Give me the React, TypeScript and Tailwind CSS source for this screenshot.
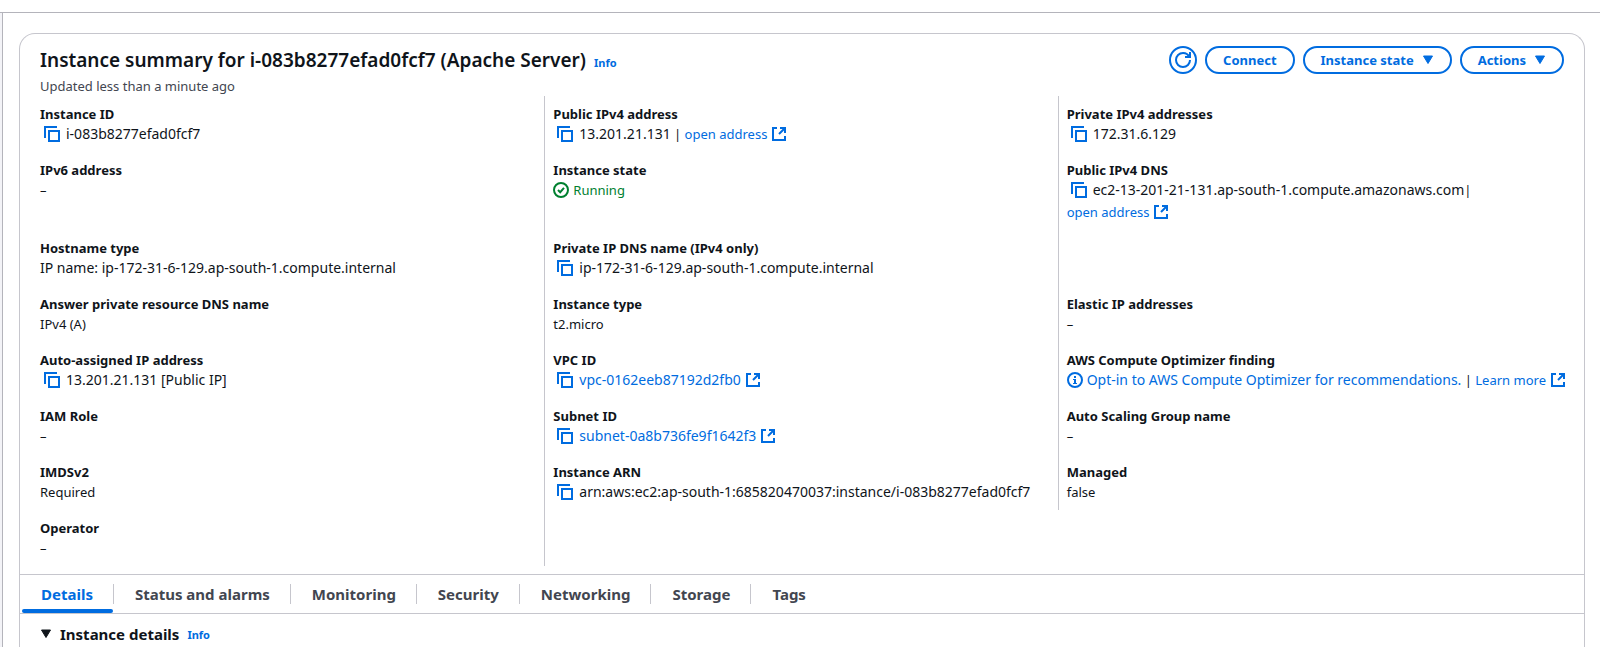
import { useState, type ReactNode } from "react";

function CopyIcon() {
  return (
    <svg viewBox="0 0 16 16" className="size-4" fill="none" stroke="currentColor" strokeWidth="2" aria-hidden="true">
      <path d="M1 12V1h12" />
      <path d="M5 5h10v10H5z" />
    </svg>
  );
}

function ExternalIcon() {
  return (
    <svg viewBox="0 0 16 16" className="ml-1 inline-block size-4 align-[-3px]" fill="none" stroke="currentColor" strokeWidth="2" aria-hidden="true">
      <path d="M6 2H2v12h12v-4" />
      <path d="M9 2h5v5M14 2L8 8" />
    </svg>
  );
}

function Caret() {
  return (
    <svg viewBox="0 0 12 10" className="h-[10px] w-3" aria-hidden="true">
      <path d="M1.5 1h9L6 8.5z" fill="currentColor" stroke="currentColor" strokeWidth="1" strokeLinejoin="round" />
    </svg>
  );
}

function Copy({ label, children }: { label: string; children: ReactNode }) {
  return (
    <>
      <button type="button" aria-label={label} className="mr-[6px] ml-1 inline-block size-4 align-[-3px] text-[#006ce0]">
        <CopyIcon />
      </button>
      <Code>{children}</Code>
    </>
  );
}

function Code({ children }: { children: ReactNode }) {
  return <span className="text-[14px] leading-5">{children}</span>;
}

function TextLink({ external, children }: { external?: boolean; children: ReactNode }) {
  return (
    <a href="#" className="text-[#006ce0] hover:underline">
      {children}
      {external && <ExternalIcon />}
    </a>
  );
}

type Field = { label: string; value: ReactNode } | null;

const ARN = "arn:aws:ec2:ap-south-1:685820470037:instance/i-083b8277efad0fcf7";

const rows: Field[][] = [
  [
    { label: "Instance ID", value: <Copy label="Copy instance ID">i-083b8277efad0fcf7</Copy> },
    {
      label: "Public IPv4 address",
      value: (
        <>
          <Copy label="Copy public IPv4 address">13.201.21.131</Copy> | <TextLink external>open address</TextLink>
        </>
      ),
    },
    { label: "Private IPv4 addresses", value: <Copy label="Copy private IPv4 address">172.31.6.129</Copy> },
  ],
  [
    { label: "IPv6 address", value: "–" },
    {
      label: "Instance state",
      value: (
        <span className="text-[#00802f]">
          <svg viewBox="0 0 16 16" className="mr-1 inline-block size-4 align-[-3px]" fill="none" stroke="currentColor" strokeWidth="2" aria-hidden="true">
            <circle cx="8" cy="8" r="7" />
            <path d="M5 8l2.2 2.2L11 5.8" />
          </svg>
          Running
        </span>
      ),
    },
    {
      label: "Public IPv4 DNS",
      value: (
        <>
          <div>
            <Copy label="Copy public IPv4 DNS">ec2-13-201-21-131.ap-south-1.compute.amazonaws.com</Copy>|
          </div>
          <div className="pt-[2px]">
            <TextLink external>open address</TextLink>
          </div>
        </>
      ),
    },
  ],
  [
    { label: "Hostname type", value: <Code>IP name: ip-172-31-6-129.ap-south-1.compute.internal</Code> },
    {
      label: "Private IP DNS name (IPv4 only)",
      value: <Copy label="Copy private IP DNS name">ip-172-31-6-129.ap-south-1.compute.internal</Copy>,
    },
    null,
  ],
  [
    { label: "Answer private resource DNS name", value: "IPv4 (A)" },
    { label: "Instance type", value: "t2.micro" },
    { label: "Elastic IP addresses", value: "–" },
  ],
  [
    { label: "Auto-assigned IP address", value: <Copy label="Copy auto-assigned IP address">13.201.21.131 [Public IP]</Copy> },
    {
      label: "VPC ID",
      value: (
        <Copy label="Copy VPC ID">
          <TextLink external>vpc-0162eeb87192d2fb0</TextLink>
        </Copy>
      ),
    },
    {
      label: "AWS Compute Optimizer finding",
      value: (
        <>
          <svg viewBox="0 0 16 16" className="mr-1 inline-block size-4 align-[-3px] text-[#006ce0]" fill="none" stroke="currentColor" strokeWidth="2" aria-hidden="true">
            <circle cx="8" cy="8" r="7" />
            <path d="M8 4v2M8 7v5" />
            <path d="M6 7.5h2M6 11.5h4" strokeWidth="1" />
          </svg>
          <Code>
            <TextLink>Opt-in to AWS Compute Optimizer for recommendations.</TextLink>
          </Code>{" "}
          | <TextLink external>Learn more</TextLink>
        </>
      ),
    },
  ],
  [
    { label: "IAM Role", value: "–" },
    {
      label: "Subnet ID",
      value: (
        <Copy label="Copy subnet ID">
          <TextLink external>subnet-0a8b736fe9f1642f3</TextLink>
        </Copy>
      ),
    },
    { label: "Auto Scaling Group name", value: "–" },
  ],
  [
    { label: "IMDSv2", value: "Required" },
    { label: "Instance ARN", value: <Copy label="Copy instance ARN">{ARN}</Copy> },
    { label: "Managed", value: "false" },
  ],
  [{ label: "Operator", value: "–" }],
];

const tabs = ["Details", "Status and alarms", "Monitoring", "Security", "Networking", "Storage", "Tags"];

const pill =
  "flex h-7 items-center rounded-full border-2 border-[#006ce0] text-[13px] font-bold text-[#006ce0] hover:bg-[#f0fbff]";

function Cell({ field, last }: { field: Field; last: boolean }) {
  return (
    <div className={`min-w-0 px-2 py-2 ${last ? "" : "border-r border-[#c6c6cd]"}`}>
      {field && (
        <>
          <dt className="font-bold">{field.label}</dt>
          <dd className="whitespace-nowrap">{field.value}</dd>
        </>
      )}
    </div>
  );
}

export default function App() {
  const [active, setActive] = useState("Details");

  return (
    <div className="flex min-h-screen flex-col bg-white font-['Noto_Sans',sans-serif] text-[13px] leading-5 text-[#0f141a]">
      <div className="h-[13px] border-b border-[#b4b4bb]" />
      <div className="flex flex-1">
        <div className="w-[3px] shrink-0 border-r border-[#b4b4bb] bg-[#f3f3f7]" />
        <main className="flex min-w-0 flex-1 flex-col pt-5 pr-[15px] pl-4">
          <section className="flex-1 rounded-t-2xl border border-b-0 border-[#c6c6cd]">
            <header className="flex items-start justify-between px-5 pt-3">
              <div>
                <div className="flex h-7 items-baseline gap-2">
                  <h1 className="text-[19px] leading-7 font-semibold">
                    Instance summary for i-083b8277efad0fcf7 (Apache Server)
                  </h1>
                  <a href="#" className="text-[11px] font-bold text-[#006ce0]">Info</a>
                </div>
                <p className="pt-[2px] text-[#424650]">Updated less than a minute ago</p>
              </div>
              <div className="flex gap-2">
                <button type="button" aria-label="Refresh" className={`${pill} w-7 justify-center`}>
                  <svg viewBox="0 0 16 16" className="size-4 shrink-0" fill="none" stroke="currentColor" strokeWidth="2" aria-hidden="true">
                    <path d="M15 8a7 7 0 1 1-7-7 6.87 6.87 0 0 1 6.3 4" />
                    <path d="M10 5h5V0" />
                  </svg>
                </button>
                <button type="button" className={`${pill} px-4`}>Connect</button>
                <button type="button" className={`${pill} gap-2 px-4`}>
                  Instance state <Caret />
                </button>
                <button type="button" className={`${pill} gap-2 px-4`}>
                  Actions <Caret />
                </button>
              </div>
            </header>

            <dl className="px-3 pb-2">
              {rows.map((row, r) => (
                <div key={r} className="grid grid-cols-3">
                  {row.map((field, c) => (
                    <Cell key={c} field={field} last={c === 2} />
                  ))}
                </div>
              ))}
            </dl>

            <div role="tablist" className="flex h-10 items-stretch border-y border-[#c6c6cd] pl-[2px]">
              {tabs.map((tab, i) => (
                <div key={tab} className="flex items-center">
                  <button
                    type="button"
                    role="tab"
                    aria-selected={active === tab}
                    onClick={() => setActive(tab)}
                    className={`relative h-full text-[15px] font-bold ${i === 0 ? "pr-5 pl-[19px]" : "pr-5 pl-[21px]"} ${
                      active === tab ? "text-[#006ce0]" : "text-[#424650]"
                    }`}
                  >
                    {tab}
                    {active === tab && <span className="absolute inset-x-0 bottom-0 h-1 rounded-sm bg-[#006ce0]" />}
                  </button>
                  {i < tabs.length - 1 && <span className="h-5 w-px bg-[#c6c6cd]" />}
                </div>
              ))}
            </div>

            <div className="flex items-baseline gap-2 px-5 pt-2">
              <button type="button" aria-expanded="true" className="flex items-center gap-2 text-[15px] leading-6 font-bold">
                <Caret /> Instance details
              </button>
              <a href="#" className="text-[11px] font-bold text-[#006ce0]">Info</a>
            </div>
          </section>
        </main>
      </div>
    </div>
  );
}
